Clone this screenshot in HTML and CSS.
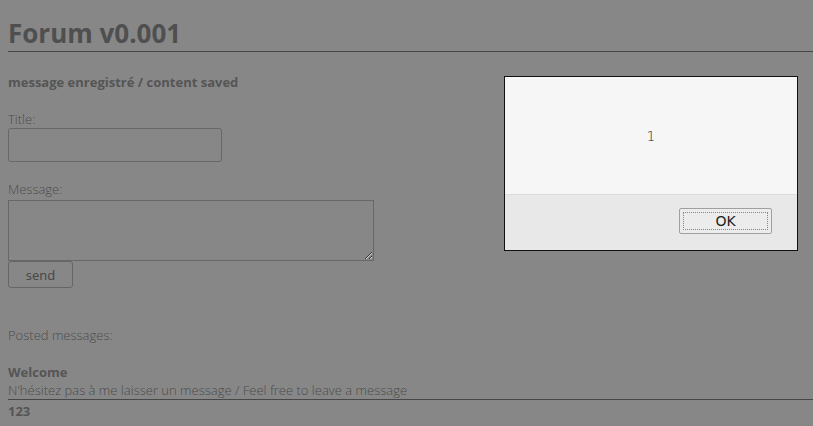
FILE: index.html
```html
<!DOCTYPE html>
<html lang="fr">
<head>
<meta charset="utf-8">
<title>Forum v0.001</title>
<link rel="stylesheet" href="styles.css">
</head>
<body>
<div class="page">
  <h1 class="title">Forum v0.001</h1>
  <p class="status">message enregistré / content saved</p>
  <form class="form">
    <label class="label label-title">Title:</label>
    <input class="input" type="text">
    <label class="label label-message">Message:</label>
    <textarea class="textarea"></textarea>
    <button class="send" type="button">send</button>
  </form>
  <p class="posted">Posted messages:</p>
  <div class="post">
    <div class="post-title">Welcome</div>
    <div class="post-body">N'hésitez pas à me laisser un message / Feel free to leave a message</div>
  </div>
  <div class="post">
    <div class="post-title">123</div>
  </div>
</div>
<div class="dialog">
  <div class="dialog-body">1</div>
  <div class="dialog-foot">
    <button class="ok" type="button"><span class="ok-inner">OK</span></button>
  </div>
</div>
</body>
</html>
```
FILE: styles.css
```css
html, body {
  margin: 0;
  padding: 0;
}
body {
  background-color: #878787;
  background-image: conic-gradient(#8a8a8a 25%, #848484 0 50%, #8a8a8a 0 75%, #848484 0);
  background-size: 2px 2px;
  font-family: "Open Sans", "Liberation Sans", sans-serif;
  font-weight: 300;
  color: #4c4c4c;
  font-size: 13px;
  line-height: 18px;
  overflow: hidden;
  height: 426px;
}
.page {
  padding: 16px 0 0 8px;
}
.title {
  margin: 0;
  font-size: 26px;
  line-height: 35px;
  font-weight: 700;
  color: #4f4f4f;
  border-bottom: 1px solid #474747;
}
.status {
  margin: 21px 0 0;
  font-weight: 700;
  color: #555;
}
.form {
  display: flex;
  flex-direction: column;
  align-items: flex-start;
}
.label {
  display: block;
}
.label-title {
  margin-top: 19px;
}
.label-message {
  margin-top: 18px;
}
.input {
  box-sizing: border-box;
  width: 214px;
  height: 34px;
  margin: 0;
  background: transparent;
  border: 1px solid #676767;
  border-radius: 3px;
}
.textarea {
  box-sizing: border-box;
  width: 366px;
  height: 61px;
  margin: 2px 0 0;
  background: transparent;
  border: 1px solid #676767;
  border-radius: 0;
  resize: both;
}
.send {
  box-sizing: border-box;
  width: 65px;
  height: 27px;
  margin: 0;
  padding: 0;
  background: transparent;
  border: 1px solid #666;
  border-radius: 3px;
  font-family: "Open Sans", "Liberation Sans", sans-serif;
  font-weight: 400;
  font-size: 13px;
  color: #444;
}
.posted {
  margin: 38px 0 0;
}
.post-title {
  margin-top: 19px;
  font-weight: 700;
  color: #555;
}
.post + .post .post-title {
  margin-top: 2px;
}
.post-body {
  border-bottom: 1px solid #474747;
}
.dialog {
  position: absolute;
  left: 504px;
  top: 76px;
  width: 292px;
  height: 173px;
  border: 1px solid #111;
  display: flex;
  flex-direction: column;
  font-family: "DejaVu Sans", sans-serif;
  color: #222;
}
.dialog-body {
  background: #f6f6f6;
  height: 117px;
  display: flex;
  align-items: center;
  justify-content: center;
  font-size: 14px;
  border-bottom: 1px solid #dcdcdc;
}
.dialog-foot {
  flex: 1;
  background: #e8e8e8;
  display: flex;
  justify-content: flex-end;
  align-items: flex-start;
  padding: 13px 25px 0 0;
}
.ok {
  box-sizing: border-box;
  width: 93px;
  height: 26px;
  padding: 3px;
  margin: 0;
  background: #ececec;
  border: 1px solid #a0a0a0;
  border-radius: 2px;
  font-family: "DejaVu Sans", sans-serif;
  font-size: 14px;
  color: #222;
}
.ok-inner {
  display: flex;
  align-items: center;
  justify-content: center;
  height: 100%;
  border: 1px dotted #888;
  box-sizing: border-box;
}
```
